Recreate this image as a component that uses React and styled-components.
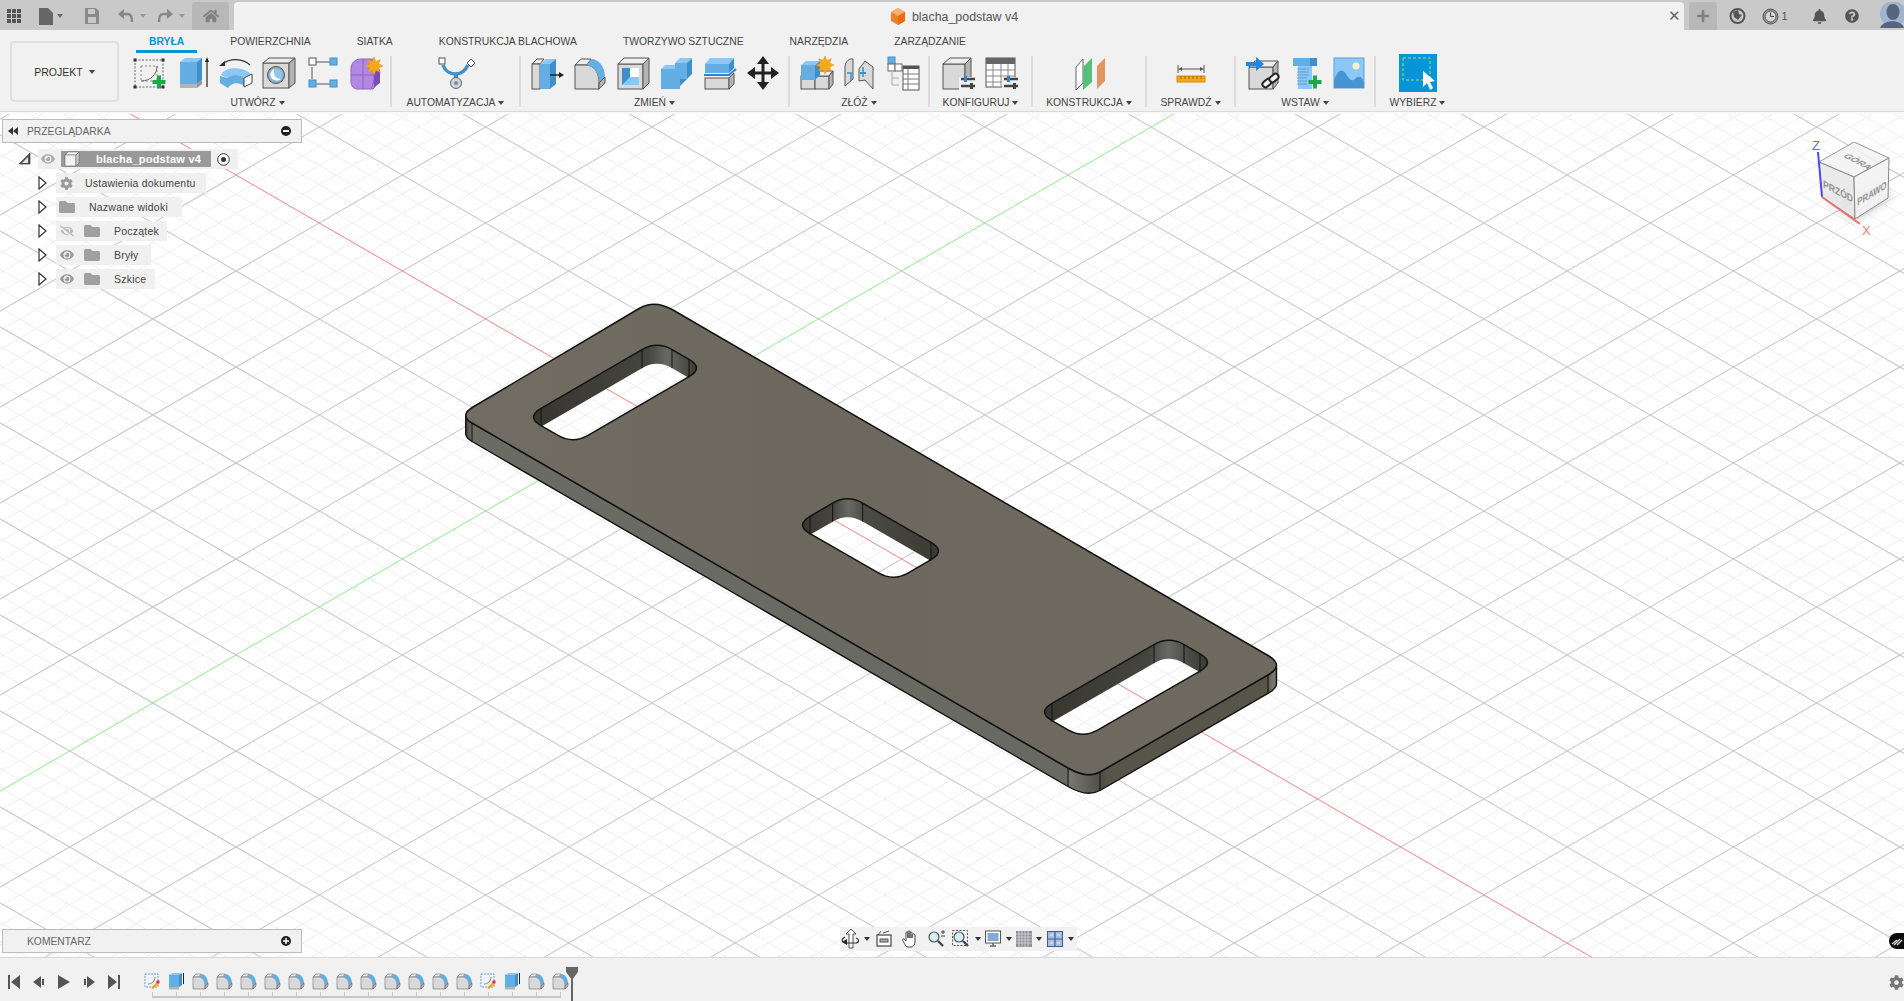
import React from "react";
import styled, { createGlobalStyle } from "styled-components";
import {
  FaBell,
  FaCog,
  FaEye,
  FaEyeSlash,
  FaFolder,
  FaHome,
  FaPlus,
  FaQuestionCircle,
} from "react-icons/fa";

const Global = createGlobalStyle`
  html, body { margin: 0; padding: 0; height: 100%; overflow: hidden; }
  body { font-family: "Liberation Sans", Arial, sans-serif; background: #fff; }
  #root { height: 100%; }
`;

const Page = styled.div`
  width: 1904px;
  height: 1001px;
  display: flex;
  flex-direction: column;
  overflow: hidden;
  background: #f9f9f9;
`;

/* ---------- top bar ---------- */
const TopBar = styled.div`
  height: 30px;
  flex: none;
  background: #c9c9c9;
  display: flex;
  align-items: flex-end;
  color: #666;
`;
const TopIcon = styled.div`
  width: ${(p) => p.$w || 30}px;
  height: 28px;
  display: flex;
  align-items: center;
  justify-content: center;
  flex: none;
  color: ${(p) => p.$color || "#666"};
`;
const Caret = styled.span`
  display: inline-block;
  width: 0;
  height: 0;
  flex: none;
  border-left: 3.5px solid transparent;
  border-right: 3.5px solid transparent;
  border-top: 4.5px solid ${(p) => p.$color || "#444"};
  margin-left: ${(p) => p.$ml ?? 3}px;
`;
const HomeTab = styled(TopIcon)`
  width: 37px;
  margin-left: 4px;
  background: #b8b8b8;
  border-radius: 3px 3px 0 0;
`;
const DocTab = styled.div`
  width: 1450px;
  margin-left: 5px;
  height: 28px;
  background: #f1f1f1;
  border-radius: 4px 4px 0 0;
  display: flex;
  align-items: center;
  position: relative;
`;
const DocTitle = styled.div`
  flex: 1;
  display: flex;
  align-items: center;
  justify-content: center;
  gap: 6px;
  font-size: 12.4px;
  color: #555;
  padding-left: 10px;
  padding-top: 1px;
  box-sizing: border-box;
  height: 28px;
`;
const CloseX = styled.div`
  width: 20px;
  margin-right: 0;
  font-size: 15px;
  color: #666;
  text-align: center;
`;
const PlusTab = styled(TopIcon)`
  width: 28px;
  margin-left: 5px;
  background: #b8b8b8;
  border-radius: 3px 3px 0 0;
`;
const ClockCount = styled.span`
  font-size: 11px;
  margin-left: 2px;
  color: #555;
`;
const AvatarSlot = styled.div`
  margin-left: auto;
  height: 26px;
  align-self: flex-start;
  margin-top: 2px;
`;

/* ---------- toolbar ---------- */
const Toolbar = styled.div`
  height: 81px;
  flex: none;
  background: #f1f1f1;
  display: flex;
  border-bottom: 1px solid #dadada;
  position: relative;
  z-index: 2;
`;
const ProjectButton = styled.div`
  width: 109px;
  height: 61px;
  margin: 11px 0 0 10px;
  box-sizing: border-box;
  border: 2px solid #e0e0e0;
  border-radius: 4px;
  display: flex;
  align-items: center;
  justify-content: center;
  font-size: 10.5px;
  color: #333;
  flex: none;
`;
const ToolColumn = styled.div`
  margin-left: 7px;
  display: flex;
  flex-direction: column;
`;
const Tabs = styled.div`
  display: flex;
  height: 23px;
`;
const Tab = styled.div`
  position: relative;
  padding: 0 23px;
  font-size: 10.35px;
  line-height: 23px;
  color: ${(p) => (p.$active ? "#0696d7" : "#444")};
  font-weight: ${(p) => (p.$active ? 700 : 400)};
  &::after {
    content: "";
    display: ${(p) => (p.$active ? "block" : "none")};
    position: absolute;
    left: 10px;
    right: 10px;
    bottom: 0;
    height: 3px;
    background: #0696d7;
  }
`;
const Groups = styled.div`
  display: flex;
  padding-left: 2px;
  margin-top: 3px;
`;
const Group = styled.div`
  width: ${(p) => p.$w}px;
  height: 51px;
  box-sizing: border-box;
  padding-right: ${(p) => p.$pr || 0}px;
  display: flex;
  flex-direction: column;
  align-items: center;
  border-right: ${(p) => (p.$last ? "none" : "2px solid #dcdcdc")};
`;
const IconRow = styled.div`
  display: flex;
  justify-content: center;
  height: 36px;
  margin-top: -1px;
`;
const ToolIcon = styled.div`
  width: ${(p) => p.$w || 43.5}px;
  height: 36px;
  display: flex;
  align-items: center;
  justify-content: center;
  flex: none;
`;
const GroupLabel = styled.div`
  margin-top: 6px;
  font-size: 10.3px;
  line-height: 12px;
  color: #444;
  display: flex;
  align-items: center;
  white-space: nowrap;
`;

/* ---------- viewport ---------- */
const Viewport = styled.div`
  flex: 1;
  margin-top: 2px;
  position: relative;
  background: #fff;
  overflow: hidden;
`;
const Canvas = styled.svg`
  position: absolute;
  inset: 0;
  width: 100%;
  height: 100%;
`;
const CubeSvg = styled.svg`
  position: absolute;
  right: 0;
  top: 6px;
  width: 144px;
  height: 130px;
`;
const BrowserPanel = styled.div`
  position: absolute;
  left: 2px;
  top: 5px;
  width: 300px;
`;
const PanelHead = styled.div`
  height: 24px;
  box-sizing: border-box;
  background: #f1f1f1;
  border: 1px solid #bbb;
  display: flex;
  align-items: center;
  font-size: 10.3px;
  color: #666;
  padding-left: ${(p) => p.$pl}px;
  position: relative;
`;
const Tree = styled.div`
  display: flex;
  flex-direction: column;
  gap: 4px;
  margin-top: 6px;
`;
const RootRow = styled.div`
  display: flex;
  align-items: center;
  height: 20px;
  padding-left: 17px;
`;
const RootBody = styled.div`
  height: 20px;
  width: 200px;
  margin-left: 7px;
  background: #f0f0f0;
  display: flex;
  align-items: center;
  padding-left: 3px;
  box-sizing: border-box;
  color: #aaa;
`;
const RootName = styled.div`
  width: 150px;
  height: 16px;
  margin-left: 6px;
  background: #999;
  display: flex;
  align-items: center;
  color: #fff;
  font-size: 11px;
  font-weight: 700;
  letter-spacing: 0.25px;
  box-sizing: border-box;
  padding-left: 3px;
  gap: 16px;
  white-space: nowrap;
`;
const TreeRow = styled.div`
  display: flex;
  align-items: center;
  height: 20px;
  padding-left: 36px;
`;
const RowBody = styled.div`
  height: 20px;
  margin-left: 9px;
  background: #f0f0f0;
  display: flex;
  align-items: center;
  width: ${(p) => p.$w}px;
  box-sizing: border-box;
  color: #999;
  font-size: 10.5px;
  letter-spacing: 0.22px;
  position: relative;
`;
const RowSlot = styled.span`
  width: ${(p) => p.$w}px;
  flex: none;
  display: flex;
  justify-content: center;
  align-items: center;
`;
const RowText = styled.span`
  color: #444;
  margin-left: ${(p) => p.$ml || 0}px;
  white-space: nowrap;
`;
const CommentPanel = styled.div`
  position: absolute;
  left: 2px;
  bottom: 4px;
  width: 300px;
`;
const NavBar = styled.div`
  position: absolute;
  left: 840px;
  top: 813px;
  width: 237px;
  height: 24px;
  background: #f1f1f1;
  display: flex;
  align-items: center;
  padding-left: 1px;
  box-sizing: border-box;
`;
const NavIcon = styled.div`
  width: ${(p) => p.$w}px;
  display: flex;
  align-items: center;
  justify-content: center;
  flex: none;
`;
const Badge = styled.div`
  position: absolute;
  right: -1px;
  bottom: 8px;
  width: 16px;
  height: 16px;
  border-radius: 50% 0 0 50%;
  background: #0c0c0c;
  display: flex;
  align-items: center;
  justify-content: center;
`;

/* ---------- timeline ---------- */
const Timeline = styled.div`
  height: 43px;
  flex: none;
  background: #f1f1f1;
  border-top: 1px solid #d8d8d8;
  display: flex;
  align-items: flex-start;
  position: relative;
`;
const Transport = styled.div`
  display: flex;
  width: 140px;
  padding: 17px 0 0 2px;
  box-sizing: border-box;
  flex: none;
`;
const TransportBtn = styled.div`
  width: 24.8px;
  display: flex;
  justify-content: center;
`;
const TimeItems = styled.div`
  position: relative;
  display: flex;
  padding-top: 14px;
  height: 41px;
  box-sizing: border-box;
  &::after {
    content: "";
    position: absolute;
    left: 12px;
    right: 12px;
    bottom: 1px;
    height: 2px;
    background: #c8c8c8;
  }
`;
const TimeItem = styled.div`
  width: 24px;
  height: 18px;
  display: flex;
  justify-content: center;
  position: relative;
  &::after {
    content: "";
    position: absolute;
    left: 12px;
    top: 20px;
    width: 1px;
    height: 6px;
    background: #c8c8c8;
  }
`;
const Marker = styled.svg`
  position: absolute;
  left: 565px;
  top: 9px;
  width: 14px;
  height: 34px;
`;
const GearCorner = styled.div`
  margin-left: auto;
  padding: 17px 0 0;
  margin-right: 0;
  color: #777;
  display: flex;
`;

/* ---------- small helpers ---------- */
const Ico = ({ w = 40, h = 36, children }) => (
  <svg width={w} height={h} viewBox={`0 0 ${w} ${h}`}>
    {children}
  </svg>
);

const BLUE = "#64aee4";
const DBLUE = "#3f8fcb";
const LBLUE = "#8cc7f5";
const GR = "#d9d9d9";
const GR2 = "#b4b4b4";
const OUT = "#555";

const Star = ({ x, y, r = 7 }) => {
  const pts = [];
  for (let i = 0; i < 16; i++) {
    const a = (i * Math.PI) / 8;
    const rr = i % 2 ? r * 0.55 : r;
    pts.push(`${x + rr * Math.cos(a)},${y + rr * Math.sin(a)}`);
  }
  return <polygon points={pts.join(" ")} fill="#f5a81c" stroke="#e08a10" strokeWidth=".5" />;
};

const GreenPlus = ({ x, y }) => (
  <g fill="#1fa84b">
    <rect x={x - 6.5} y={y - 2} width="13" height="4" />
    <rect x={x - 2} y={y - 6.5} width="4" height="13" />
  </g>
);

const SketchIcon = () => (
  <Ico>
    <rect x="6" y="5" width="28" height="27" fill="none" stroke="#666" strokeDasharray="2 1.5" />
    {[[6, 5], [34, 5], [6, 32], [34, 32]].map(([x, y]) => (
      <rect key={x + "" + y} x={x - 1.5} y={y - 1.5} width="3" height="3" fill="#333" />
    ))}
    <rect x="12" y="11" width="16" height="15" fill="none" stroke="#888" strokeDasharray="2 2" />
    <path d="M28 11C28 19 22 26 12 26" fill="none" stroke="#666" />
    <GreenPlus x="30" y="27" />
  </Ico>
);
const ExtrudeIcon = () => (
  <Ico>
    <rect x="8" y="7" width="17" height="22" fill={BLUE} />
    <polygon points="8,7 13,3 30,3 25,7" fill={LBLUE} />
    <polygon points="25,7 30,3 30,25 25,29" fill={DBLUE} />
    <rect x="8" y="29" width="17" height="4" fill={GR2} />
    <polygon points="25,29 30,25 30,29 25,33" fill="#999" />
    <path d="M35 32V6" stroke="#222" strokeWidth="1.2" />
    <polygon points="35,2 33,7 37,7" fill="#222" />
  </Ico>
);
const RevolveIcon = () => (
  <Ico>
    <path d="M5 20C8 11 30 11 35 20L28 23C24 19 15 19 11 23Z" fill={LBLUE} />
    <path d="M4 21L11 23C15 19 24 19 28 23L28 31C24 27 15 27 12 33L4 28Z" fill={BLUE} />
    <polygon points="28,23 36,19 36,28 28,32" fill="#fff" stroke="#444" />
    <path d="M6 9C14 3 27 3 34 10" fill="none" stroke="#333" strokeWidth="1.2" />
    <polygon points="3,11 9,6 9,11" fill="#333" />
  </Ico>
);
const HoleIcon = () => (
  <Ico>
    <rect x="4" y="8" width="26" height="25" fill={GR} stroke={OUT} />
    <polygon points="4,8 10,3 36,3 30,8" fill="#eee" stroke={OUT} />
    <polygon points="30,8 36,3 36,28 30,33" fill={GR2} stroke={OUT} />
    <circle cx="17" cy="20" r="8.5" fill="#9aa7b0" stroke="#555" />
    <circle cx="17" cy="20" r="6.5" fill={LBLUE} />
    <path d="M15 14C14 20 17 24 22 24C18 27 12 25 11.5 20C11.4 17 13 15 15 14Z" fill="#fff" />
  </Ico>
);
const ParamIcon = () => (
  <Ico>
    <path d="M13 7H28M9 12V24M13 29H28" stroke="#555" fill="none" />
    <rect x="6" y="3" width="7" height="7" fill="#fff" stroke="#555" />
    <rect x="27" y="3" width="7" height="7" fill={BLUE} stroke={DBLUE} />
    <rect x="6" y="25" width="7" height="7" fill={BLUE} stroke={DBLUE} />
    <rect x="27" y="25" width="7" height="7" fill={BLUE} stroke={DBLUE} />
  </Ico>
);
const FormIcon = () => (
  <Ico>
    <path d="M5 14C5 8 9 4 15 4H27L32 14V28L27 34H11C7 34 5 30 5 27Z" fill="#b188e2" stroke="#8e62c4" />
    <path d="M5 20H32M17 4V34M27 14C29 22 28 28 25 34" fill="none" stroke="#8e62c4" />
    <path d="M28 17L34 14V28L28 32Z" fill="#7a4cb4" />
    <Star x={28} y={11} r={9} />
  </Ico>
);
const AutomateIcon = () => (
  <Ico>
    <path d="M7 10C10 18 15 19 20 19C25 19 29 16 32 10" fill="none" stroke={DBLUE} strokeWidth="3.5" />
    <path d="M20 18V28" stroke={DBLUE} strokeWidth="4" />
    <circle cx="20" cy="28" r="5.5" fill="#c9d4dc" stroke="#667" />
    <circle cx="20" cy="28" r="2" fill="#889" />
    <rect x="3" y="3" width="6" height="6" fill="#fff" stroke="#555" />
    <polygon points="31,8 35,4 39,8 35,12" fill="#fff" stroke="#555" />
  </Ico>
);
const PressPullIcon = () => (
  <Ico>
    <polygon points="6,9 11,4 18,4 14,9" fill="#eee" stroke={OUT} />
    <rect x="6" y="9" width="8" height="25" fill={GR} stroke={OUT} />
    <rect x="14" y="9" width="10" height="25" fill={BLUE} />
    <polygon points="14,9 20,4 30,4 24,9" fill={LBLUE} />
    <polygon points="24,9 30,4 30,29 24,34" fill={DBLUE} />
    <path d="M24 20H34" stroke="#222" strokeWidth="1.5" />
    <polygon points="38,20 33,17 33,23" fill="#222" />
  </Ico>
);
const FilletIcon = ({ s = 1 }) => (
  <svg width={40 * s} height={36 * s} viewBox="0 0 40 36">
    <path d="M6 10L12 4H22L18 10Z" fill="#eee" stroke={OUT} />
    <path d="M6 10H16C26 10 30 18 30 28V34H6Z" fill={GR} stroke={OUT} />
    <path d="M22 4C30 4 36 12 36 22L30 28C30 18 26 12 18 10Z" fill={BLUE} />
    <polygon points="30,28 36,22 36,28 30,34" fill={GR2} stroke={OUT} />
  </svg>
);
const ShellIcon = () => (
  <Ico>
    <rect x="5" y="9" width="25" height="25" fill={GR} stroke={OUT} />
    <polygon points="5,9 11,3 36,3 30,9" fill="#eee" stroke={OUT} />
    <polygon points="30,9 36,3 36,28 30,34" fill={GR2} stroke={OUT} />
    <rect x="9" y="13" width="17" height="17" fill="#fff" />
    <rect x="9" y="13" width="8" height="17" fill={DBLUE} />
    <polygon points="9,30 17,22 26,22 26,30" fill={LBLUE} />
  </Ico>
);
const CombineIcon = () => (
  <Ico>
    <polygon points="19,8 24,3 36,3 31,8" fill={LBLUE} />
    <polygon points="5,14 9,10 19,10 19,14" fill={LBLUE} />
    <path d="M5 14H19V8H31V24H24V34H5Z" fill={BLUE} />
    <polygon points="31,8 36,3 36,19 31,24" fill={DBLUE} />
    <polygon points="24,24 31,24 24,31" fill={DBLUE} />
  </Ico>
);
const SplitIcon = () => (
  <Ico>
    <polygon points="5,9 10,3 34,3 29,9" fill={LBLUE} />
    <rect x="5" y="9" width="24" height="9" fill={BLUE} />
    <polygon points="29,9 34,3 34,13 29,18" fill={DBLUE} />
    <path d="M4 20H29L36 14" stroke="#2d82d2" strokeWidth="2" fill="none" />
    <rect x="5" y="23" width="24" height="11" fill={GR} stroke={OUT} />
    <polygon points="29,23 34,18 34,29 29,34" fill={GR2} stroke={OUT} />
  </Ico>
);
const MoveIcon = () => (
  <Ico>
    <path d="M20 6V30M6 18H34" stroke="#222" strokeWidth="3" />
    <polygon points="20,1 14,9 26,9" fill="#222" />
    <polygon points="20,35 14,27 26,27" fill="#222" />
    <polygon points="4,18 12,12 12,24" fill="#222" />
    <polygon points="36,18 28,12 28,24" fill="#222" />
  </Ico>
);
const NewComponentIcon = () => (
  <Ico>
    <rect x="5" y="21" width="14" height="13" fill={GR} stroke={OUT} />
    <rect x="19" y="21" width="14" height="13" fill={GR} stroke={OUT} />
    <polygon points="19,21 24,16 37,16 33,21" fill="#eee" stroke={OUT} />
    <polygon points="33,21 37,16 37,29 33,34" fill={GR2} stroke={OUT} />
    <rect x="5" y="10" width="14" height="15" fill={BLUE} />
    <polygon points="5,10 10,6 24,6 19,10" fill={LBLUE} />
    <polygon points="19,10 24,6 24,20 19,25" fill={DBLUE} />
    <Star x={29} y={10} r={9} />
  </Ico>
);
const JointIcon = () => (
  <Ico>
    <path d="M6 12C6 6 11 3 14 4V24L6 31Z" fill={GR} stroke={OUT} />
    <path d="M34 12L26 6L20 14V26L26 25L34 34Z" fill={GR} stroke={OUT} />
    <path d="M12 18V26M24 12V22M8 18H13" stroke={DBLUE} strokeWidth="1.5" fill="none" />
    <rect x="21" y="17" width="6" height="2" fill={DBLUE} />
  </Ico>
);
const BomIcon = () => (
  <Ico>
    <rect x="5" y="2" width="7" height="7" fill={BLUE} stroke={DBLUE} />
    <rect x="5" y="9" width="7" height="7" fill="#fff" stroke="#666" />
    <rect x="12" y="9" width="7" height="7" fill="#fff" stroke="#666" />
    <path d="M9 16V30H16M9 23H16" stroke="#aaa" fill="none" />
    <rect x="20" y="11" width="16" height="24" fill="#fff" stroke="#555" />
    <rect x="20" y="11" width="16" height="3" fill="#555" />
    <path d="M20 19H36M20 24H36M20 29H36M25 14V35" stroke="#777" />
  </Ico>
);
const Sliders = ({ x, y }) => (
  <g>
    <path d={`M${x} ${y}H${x + 14}M${x} ${y + 7}H${x + 14}`} stroke="#444" strokeWidth="2.5" />
    <rect x={x + 3} y={y - 3} width="3" height="6" fill="#2d82d2" />
    <rect x={x + 9} y={y + 4} width="3" height="6" fill="#444" />
  </g>
);
const ConfigBoxIcon = () => (
  <Ico>
    <rect x="4" y="9" width="22" height="25" fill={GR} stroke={OUT} />
    <polygon points="4,9 11,3 32,3 26,9" fill="#eee" stroke={OUT} />
    <polygon points="26,9 32,3 32,28 26,34" fill={GR2} stroke={OUT} />
    <rect x="20" y="22" width="18" height="14" fill="#f1f1f1" />
    <Sliders x={22} y={24} />
  </Ico>
);
const ConfigTableIcon = () => (
  <Ico>
    <rect x="4" y="3" width="29" height="29" fill="#fff" stroke="#555" />
    <rect x="4" y="3" width="29" height="6" fill="#666" />
    <path d="M4 15H33M4 21H33M4 27H33M11 9V32M19 9V32M26 9V32" stroke="#888" />
    <rect x="20" y="22" width="18" height="14" fill="#f1f1f1" />
    <Sliders x={22} y={24} />
  </Ico>
);
const PlaneIcon = () => (
  <Ico>
    <polygon points="7,12 14,4 14,28 7,35" fill="#fff" stroke="#666" />
    <polygon points="14,12 23,3 23,27 14,35" fill="#56c07a" />
    <polygon points="28,11 36,3 36,26 28,34" fill="#e09660" />
  </Ico>
);
const MeasureIcon = () => (
  <Ico>
    <path d="M7 10V18M33 10V18M9 14H31" stroke="#555" fill="none" />
    <polygon points="7,14 11,12 11,16" fill="#555" />
    <polygon points="33,14 29,12 29,16" fill="#555" />
    <rect x="6" y="21" width="28" height="6" fill="#f5a81c" stroke="#d08c10" />
    <path d="M10 21V24M14 21V24M18 21V24M22 21V24M26 21V24M30 21V24" stroke="#a06a00" />
  </Ico>
);
const DeriveIcon = () => (
  <Ico>
    <rect x="7" y="12" width="24" height="22" fill={GR} stroke={OUT} />
    <polygon points="7,12 13,6 36,6 31,12" fill="#eee" stroke={OUT} />
    <polygon points="31,12 36,6 36,28 31,34" fill={GR2} stroke={OUT} />
    <path d="M4 9H16" stroke="#1e88e5" strokeWidth="4" />
    <polygon points="22,9 14,2 14,16" fill="#1e88e5" />
    <g fill="#f1f1f1" stroke="#222" strokeWidth="2">
      <rect x="20" y="25" width="10" height="6" rx="3" transform="rotate(-40 25 28)" />
      <rect x="27" y="20" width="10" height="6" rx="3" transform="rotate(-40 32 23)" />
    </g>
  </Ico>
);
const BoltIcon = () => (
  <Ico>
    <rect x="8" y="3" width="24" height="8" rx="1" fill={BLUE} />
    <rect x="25" y="3" width="7" height="8" fill={DBLUE} />
    <rect x="13" y="11" width="14" height="23" fill={LBLUE} />
    <path d="M12 14H24M12 17H24M12 20H24M12 23H22M12 26H22M12 29H22" stroke="#5aa0d6" />
    <GreenPlus x="30" y="27" />
  </Ico>
);
const ImageIcon = () => (
  <Ico>
    <rect x="5" y="3" width="30" height="30" fill={LBLUE} stroke="#5aa0d6" />
    <circle cx="27" cy="11" r="3.5" fill="#fdf3c8" />
    <path d="M5 33V25C10 13 14 13 19 22C22 26 24 26 26 24C30 20 33 22 35 27V33Z" fill="#4695d2" />
  </Ico>
);
const SelectIcon = () => (
  <svg width="38" height="38" viewBox="0 0 38 38">
    <rect width="38" height="38" fill="#0696d7" />
    <rect x="4" y="4" width="27" height="22" fill="none" stroke="#9be36a" strokeDasharray="3 2" />
    <polygon points="24,17 24,33 28,29 31,36 34,34 31,28 36,27" fill="#fff" />
  </svg>
);

const TinySketch = () => (
  <svg width="18" height="18" viewBox="0 0 18 18">
    <rect x="2" y="2" width="13" height="13" fill="#eef4fa" stroke="#6aa7d8" strokeDasharray="2 1" />
    <path d="M12 5C12 9 9 12 5 12" stroke="#888" fill="none" />
    <path d="M8 16L14 10L16 12L10 17Z" fill="#f5a81c" />
    <circle cx="15" cy="10" r="1.8" fill="#e33" />
  </svg>
);
const TinyExtrude = () => (
  <svg width="18" height="18" viewBox="0 0 18 18">
    <rect x="2" y="3" width="10" height="12" fill={BLUE} />
    <polygon points="2,3 5,1 15,1 12,3" fill={LBLUE} />
    <polygon points="12,3 15,1 15,13 12,15" fill={DBLUE} />
    <rect x="2" y="15" width="10" height="2.5" fill={GR2} />
    <path d="M16.5 12V1" stroke="#222" />
  </svg>
);
const TinyFillet = () => <FilletIcon s={0.5} />;

const timelineOps = [
  TinySketch, TinyExtrude,
  TinyFillet, TinyFillet, TinyFillet, TinyFillet, TinyFillet, TinyFillet,
  TinyFillet, TinyFillet, TinyFillet, TinyFillet, TinyFillet, TinyFillet,
  TinySketch, TinyExtrude, TinyFillet, TinyFillet,
];

/* ---------- canvas geometry ---------- */
const ISO = 0.577;
const OX = 652;
const OY = 415;
const STEP = 19.2;

function GridLines() {
  const lines = [];
  for (let k = -90; k <= 90; k++) {
    if (k === 0) continue;
    const major = k % 5 === 0;
    const stroke = major ? "#cbcbcb" : "#ededed";
    const dy = k * STEP;
    [1, -1].forEach((s) => {
      lines.push(
        <line
          key={`${k}${s}`}
          x1={0}
          x2={1904}
          y1={OY + s * ISO * (0 - OX) + dy}
          y2={OY + s * ISO * (1904 - OX) + dy}
          stroke={stroke}
          strokeWidth={major ? 1.1 : 1}
        />
      );
    });
  }
  // minor lines go underneath the major ones
  lines.sort((a, b) => (a.props.strokeWidth > b.props.strokeWidth ? 1 : -1));
  return <g>{lines}</g>;
}

const lerp = (a, b, f) => [a[0] + (b[0] - a[0]) * f, a[1] + (b[1] - a[1]) * f];

// rounded parallelogram through sharp corners L, T, R, B
function quadPath(c, t) {
  let d = "";
  c.forEach((p, i) => {
    const prev = c[(i + 3) % 4];
    const next = c[(i + 1) % 4];
    const a = lerp(p, prev, t / Math.abs(p[0] - prev[0]));
    const b = lerp(p, next, t / Math.abs(p[0] - next[0]));
    d += `${i === 0 ? "M" : "L"}${a[0]} ${a[1]}Q${p[0]} ${p[1]} ${b[0]} ${b[1]}`;
  });
  return d + "Z";
}

const THICK = 18.5;
const holeCorners = (L, T, R) => [L, T, R, [L[0] + R[0] - T[0], L[1] + R[1] - T[1]]];
const HOLES = [
  { c: holeCorners([526, 417], [657, 341], [704, 368]), g: 0.82 },
  { c: holeCorners([795, 525], [847.6, 494.5], [946, 551]), g: 0.34 },
  { c: holeCorners([1037, 712], [1169, 636], [1215, 662.5]), g: 0.76 },
];
const HOLE_T = 15;

const PLATE_TOP =
  "M473 407L640 308Q654.6 299.4 673 310L1268 655.5Q1285 665.5 1268 674.8L1100 772Q1087 779 1068 768L472 423Q459 415.4 473 407Z";
const PLATE_SIDE =
  "M465.75 415Q465.5 419 472 423L1068 768Q1087 779 1100 772L1268 674.8Q1276.5 670 1276.5 665.4V684Q1276.5 688.6 1268 693.3L1100 790.5Q1087 797.5 1068 786.5L472 441.5Q465.5 437.5 465.75 433.5Z";

function Hole({ h, i }) {
  const d = quadPath(h.c, HOLE_T);
  const [L, T, R] = h.c;
  const ticks = [
    lerp(L, T, HOLE_T / Math.abs(L[0] - T[0])),
    lerp(T, L, HOLE_T / Math.abs(L[0] - T[0])),
    lerp(T, R, HOLE_T / Math.abs(T[0] - R[0])),
    lerp(R, T, HOLE_T / Math.abs(T[0] - R[0])),
  ];
  return (
    <g>
      <defs>
        <linearGradient id={`wall${i}`} x1="0" x2="1" y1="0" y2="0">
          <stop offset="0" stopColor="#37362f" />
          <stop offset={h.g - 0.12} stopColor="#454540" />
          <stop offset={h.g} stopColor="#686864" />
          <stop offset={h.g + 0.12} stopColor="#4c4c46" />
          <stop offset="1" stopColor="#3a3a33" />
        </linearGradient>
        <mask id={`wallMask${i}`} maskUnits="userSpaceOnUse" x="0" y="114" width="1904" height="843">
          <path d={d} fill="#fff" />
          <path d={d} fill="#000" transform={`translate(0 ${THICK})`} />
        </mask>
      </defs>
      <path d={d} fill={`url(#wall${i})`} mask={`url(#wallMask${i})`} />
      {ticks.map((p, j) => (
        <line key={j} x1={p[0]} x2={p[0]} y1={p[1]} y2={p[1] + THICK} stroke="#111" strokeWidth="1" />
      ))}
      <path d={d} fill="none" stroke="#111" strokeWidth="1.5" />
    </g>
  );
}

function Plate() {
  return (
    <g>
      <defs>
        <linearGradient id="side" gradientUnits="userSpaceOnUse" x1="465" x2="1277" y1="0" y2="0">
          <stop offset="0" stopColor="#3f3f3a" />
          <stop offset="0.008" stopColor="#6a6c64" />
          <stop offset="0.74" stopColor="#686a62" />
          <stop offset="0.745" stopColor="#76786f" />
          <stop offset="0.785" stopColor="#4f4d44" />
          <stop offset="0.79" stopColor="#57544a" />
          <stop offset="0.988" stopColor="#57544a" />
          <stop offset="0.995" stopColor="#77786e" />
          <stop offset="1" stopColor="#6e6e64" />
        </linearGradient>
        <linearGradient id="top" x1="0" x2="1" y1="0" y2="0">
          <stop offset="0" stopColor="#716d62" />
          <stop offset="0.4" stopColor="#6c685e" />
          <stop offset="1" stopColor="#6e6a60" />
        </linearGradient>
      </defs>
      <path d={PLATE_SIDE} fill="url(#side)" stroke="#111" strokeWidth="1.4" />
      {[[472, 423], [1068, 768], [1100, 772], [1268, 675]].map(([x, y]) => (
        <line key={x} x1={x} x2={x} y1={y} y2={y + THICK} stroke="#111" strokeWidth="1" />
      ))}
      <path
        d={PLATE_TOP + HOLES.map((h) => quadPath(h.c, HOLE_T)).join("")}
        fill="url(#top)"
        fillRule="evenodd"
      />
      {HOLES.map((h, i) => (
        <Hole key={i} h={h} i={i} />
      ))}
      <path d={PLATE_TOP} fill="none" stroke="#111" strokeWidth="1.5" />
    </g>
  );
}

function ViewCube() {
  return (
    <CubeSvg viewBox="1760 120 144 130">
      <defs>
        <filter id="cubeShadow" x="-30%" y="-30%" width="160%" height="160%">
          <feGaussianBlur stdDeviation="5" />
        </filter>
      </defs>
      <polygon points="1824,199 1856,222 1892,198 1880,180" fill="#000" opacity=".16" filter="url(#cubeShadow)" />
      <polygon points="1819,162 1854,142 1889,158 1854,177" fill="#f2f2f2" fillOpacity=".85" stroke="#999" />
      <polygon points="1819,162 1854,177 1855,219 1822,197" fill="#e8e8e8" fillOpacity=".9" stroke="#888" />
      <polygon points="1854,177 1889,158 1888,198 1855,219" fill="#f3f3f3" fillOpacity=".92" stroke="#888" />
      <g fontFamily="Liberation Sans, Arial, sans-serif" fontWeight="700" fontSize="10.5" fill="#949494" textAnchor="middle">
        <text transform="matrix(.8 .42 -.8 .42 1855 163)">GÓRA</text>
        <text transform="matrix(.82 .42 0 1 1838 195)">PRZÓD</text>
        <text transform="matrix(.74 -.46 0 1 1872 197)">PRAWO</text>
      </g>
      <line x1="1818" y1="152" x2="1822" y2="197" stroke="#4a4af0" strokeWidth="2" />
      <line x1="1822" y1="197" x2="1860" y2="224" stroke="#f07070" strokeWidth="2" />
      <g fontFamily="Liberation Sans, Arial, sans-serif" fontSize="13">
        <text x="1812" y="150" fill="#6a6af2">Z</text>
        <text x="1862" y="235" fill="#f08080">X</text>
      </g>
    </CubeSvg>
  );
}

/* ---------- nav bar icons ---------- */
const OrbitNav = () => (
  <svg width="20" height="20" viewBox="0 0 20 20">
    <path d="M8 19V5H5L10 0L15 5H12V19Z" fill="#fff" stroke="#555" />
    <path d="M4 8C0 10 0 14 6 14H15C19 13 18 10 15 9" fill="none" stroke="#333" strokeWidth="1.2" />
    <polygon points="1,13 6,10 6,16" fill="#222" />
  </svg>
);
const LookNav = () => (
  <svg width="18" height="18" viewBox="0 0 18 18">
    <rect x="2" y="5" width="14" height="11" fill="#fff" stroke="#444" strokeWidth="1.2" />
    <rect x="5" y="9" width="8" height="3" fill="#aaa" stroke="#555" />
    <path d="M3 5L6 1M8 3L14 1" stroke="#555" />
  </svg>
);
const HandNav = () => (
  <svg width="18" height="18" viewBox="0 0 18 18">
    <path d="M5 16C3 13 1 10 2 9C3 8 4 10 5 11V3C5 1.5 7 1.5 7 3V8V2C7 .5 9 .5 9 2V8V3C9 1.5 11 1.5 11 3V8V5C11 3.5 14 3.5 14 5V12C14 15 12 17 10 17H7C6 17 5.500 16.500 5 16Z" fill="#fff" stroke="#444" />
  </svg>
);
const ZoomNav = ({ w = 18, dashed }) => (
  <svg width={w} height="18" viewBox={`0 0 ${w} 18`}>
    {dashed && <rect x=".5" y=".5" width="15" height="15" fill="none" stroke="#555" strokeDasharray="2 1.5" />}
    <circle cx="7" cy="7" r="5" fill="#d9edf5" stroke="#555" strokeWidth="1.2" />
    <path d="M11 11L16 16" stroke="#445" strokeWidth="2.4" />
    {!dashed && <path d="M14 2H18M16 0V4M14 6H18" stroke="#444" />}
  </svg>
);
const DisplayNav = () => (
  <svg width="17" height="18" viewBox="0 0 17 18">
    <rect x=".5" y="1" width="15" height="12" fill="#fff" stroke="#555" />
    <rect x="2.5" y="3" width="11" height="8" fill="#86a9d8" />
    <path d="M5 16H11M8 13V16" stroke="#666" strokeWidth="1.5" />
  </svg>
);
const GridNav = () => (
  <svg width="17" height="17" viewBox="0 0 17 17">
    <rect width="16" height="16" fill="#8f8f96" />
    <path d="M3 0V16M6 0V16M9 0V16M12 0V16M0 3H16M0 6H16M0 9H16M0 12H16" stroke="#eee" strokeWidth=".6" />
  </svg>
);
const ViewsNav = () => (
  <svg width="17" height="17" viewBox="0 0 17 17">
    <rect x=".5" y=".5" width="15" height="15" fill="#a9bfe0" stroke="#3f5f92" />
    <path d="M8 0V16M0 8H16" stroke="#3f5f92" strokeWidth="1.2" />
    <path d="M3 4H6M10 4H13M3 12H6M10 12H13" stroke="#e8eff8" strokeWidth="1.2" />
  </svg>
);

const Expander = () => (
  <svg width="9" height="14" viewBox="0 0 9 14">
    <polygon points="1,1 8,7 1,13" fill="#fff" stroke="#333" strokeWidth="1.2" />
  </svg>
);
const SmallFolder = () => <FaFolder size={16} color="#a0a0a0" />;

const TransportIcon = ({ d }) => (
  <svg width="14" height="14" viewBox="0 0 14 14">
    <path d={d} fill="#555" />
  </svg>
);

const tabs = ["BRYŁA", "POWIERZCHNIA", "SIATKA", "KONSTRUKCJA BLACHOWA", "TWORZYWO SZTUCZNE", "NARZĘDZIA", "ZARZĄDZANIE"];

const groups = [
  { label: "UTWÓRZ", w: 264, pr: 3, icons: [SketchIcon, ExtrudeIcon, RevolveIcon, HoleIcon, ParamIcon, FormIcon] },
  { label: "AUTOMATYZACJA", w: 129, icons: [AutomateIcon] },
  { label: "ZMIEŃ", w: 269, icons: [PressPullIcon, FilletIcon, ShellIcon, CombineIcon, SplitIcon, MoveIcon] },
  { label: "ZŁÓŻ", w: 140, icons: [NewComponentIcon, JointIcon, BomIcon] },
  { label: "KONFIGURUJ", w: 103, icons: [ConfigBoxIcon, ConfigTableIcon] },
  { label: "KONSTRUKCJA", w: 114, icons: [PlaneIcon] },
  { label: "SPRAWDŹ", w: 89, icons: [MeasureIcon] },
  { label: "WSTAW", w: 140, icons: [DeriveIcon, BoltIcon, ImageIcon] },
  { label: "WYBIERZ", w: 83, last: true, icons: [SelectIcon] },
];

const rows = [
  { w: 150, icon: [<FaCog key="g" size={13} />], slots: [20], text: "Ustawienia dokumentu", ml: 9 },
  { w: 126, icon: [<SmallFolder key="f" />], slots: [22], text: "Nazwane widoki", ml: 11 },
  { w: 111, icon: [<FaEyeSlash key="e" size={14} color="#bbb" />, <SmallFolder key="f" />], slots: [22, 28], text: "Początek", ml: 8 },
  { w: 95, icon: [<FaEye key="e" size={14} />, <SmallFolder key="f" />], slots: [22, 28], text: "Bryły", ml: 8 },
  { w: 99, icon: [<FaEye key="e" size={14} />, <SmallFolder key="f" />], slots: [22, 28], text: "Szkice", ml: 8 },
];

const NavCaret = ({ w }) => (
  <NavIcon $w={w}>
    <Caret $ml={0} $color="#333" />
  </NavIcon>
);

export default function App() {
  return (
    <Page>
      <Global />
      <TopBar>
        <TopIcon $w={28}>
          <svg width="14" height="14" viewBox="0 0 14 14" fill="#555">
            {[0, 5, 10].map((x) =>
              [0, 5, 10].map((y) => <rect key={`${x}${y}`} x={x} y={y} width="4" height="4" />)
            )}
          </svg>
        </TopIcon>
        <TopIcon $w={46}>
          <svg width="14" height="17" viewBox="0 0 14 17" fill="#666">
            <path d="M0 0H9L14 5V17H0Z" />
          </svg>
          <Caret $color="#666" $ml={4} />
        </TopIcon>
        <TopIcon $w={36} $color="#888">
          <svg width="14" height="16" viewBox="0 0 14 16" fill="#8a8a8a">
            <path d="M0 0H11L14 3V16H0ZM3 1V6H10V1ZM3 9V15H11V9Z" fillRule="evenodd" />
          </svg>
        </TopIcon>
        <TopIcon $w={44}>
          <svg width="16" height="14" viewBox="0 0 16 14">
            <path d="M2 5H10C13 5 14 8 14 13" fill="none" stroke="#888" strokeWidth="2.4" />
            <polygon points="0,5 6,0 6,10" fill="#888" />
          </svg>
          <Caret $color="#999" $ml={6} />
        </TopIcon>
        <TopIcon $w={34}>
          <svg width="16" height="14" viewBox="0 0 16 14">
            <path d="M14 5H6C3 5 2 8 2 13" fill="none" stroke="#888" strokeWidth="2.4" />
            <polygon points="16,5 10,0 10,10" fill="#888" />
          </svg>
          <Caret $color="#999" $ml={6} />
        </TopIcon>
        <HomeTab $color="#808080">
          <FaHome size={16} />
        </HomeTab>
        <DocTab>
          <DocTitle>
            <svg width="16" height="17" viewBox="0 0 16 17">
              <polygon points="8,0 15,4 15,13 8,17 1,13 1,4" fill="#f07f27" />
              <polygon points="8,0 15,4 8,8 1,4" fill="#f9ae73" />
              <polygon points="8,8 15,4 15,13 8,17" fill="#e96b14" />
            </svg>
            blacha_podstaw v4
          </DocTitle>
          <CloseX>✕</CloseX>
        </DocTab>
        <PlusTab $color="#808080">
          <FaPlus size={14} />
        </PlusTab>
        <TopIcon $w={40}>
          <svg width="17" height="18" viewBox="0 0 17 18">
            <circle cx="8.500" cy="9" r="7" fill="none" stroke="#555" strokeWidth="2" />
            <path d="M4 5L9 3L10 7L13 8L9 13L5 10Z" fill="#555" />
          </svg>
        </TopIcon>
        <TopIcon $w={36}>
          <svg width="17" height="17" viewBox="0 0 17 17">
            <circle cx="8.500" cy="8.500" r="7.500" fill="#999" stroke="#555" />
            <circle cx="8.500" cy="8.500" r="5.500" fill="#d4d4d4" stroke="#555" />
            <path d="M8.500 4.500V8.500H12" fill="none" stroke="#444" />
          </svg>
          <ClockCount>1</ClockCount>
        </TopIcon>
        <TopIcon $w={52}>
          <FaBell size={15} color="#555" />
        </TopIcon>
        <TopIcon $w={14}>
          <FaQuestionCircle size={16} color="#555" />
        </TopIcon>
        <AvatarSlot>
          <svg width="24" height="26" viewBox="0 0 24 26">
            <circle cx="13" cy="12" r="13" fill="#a3b3cd" />
            <ellipse cx="13" cy="10" rx="6.500" ry="8" fill="#55657f" />
            <path d="M0 26C3 17 22 17 24 26Z" fill="#55657f" />
          </svg>
        </AvatarSlot>
      </TopBar>

      <Toolbar>
        <ProjectButton>
          PROJEKT
          <Caret $ml={6} />
        </ProjectButton>
        <ToolColumn>
          <Tabs>
            {tabs.map((t, i) => (
              <Tab key={t} $active={i === 0}>
                {t}
              </Tab>
            ))}
          </Tabs>
          <Groups>
            {groups.map((g) => (
              <Group key={g.label} $w={g.w} $pr={g.pr} $last={g.last}>
                <IconRow>
                  {g.icons.map((Icon, i) => (
                    <ToolIcon key={i}>
                      <Icon />
                    </ToolIcon>
                  ))}
                </IconRow>
                <GroupLabel>
                  {g.label}
                  <Caret $ml={3} />
                </GroupLabel>
              </Group>
            ))}
          </Groups>
        </ToolColumn>
      </Toolbar>

      <Viewport>
        <Canvas viewBox="0 114 1904 843" preserveAspectRatio="none">
          <GridLines />
          <line x1={OX - 800} x2={OX + 1400} y1={OY - 800 * ISO} y2={OY + 1400 * ISO} stroke="#f58282" />
          <line x1={0} x2={1300} y1={OY + OX * ISO} y2={OY - (1300 - OX) * ISO} stroke="#8fec8c" />
          <Plate />
        </Canvas>
        <ViewCube />

        <BrowserPanel>
          <PanelHead $pl={24}>
            <svg width="10" height="8" viewBox="0 0 10 8" style={{ position: "absolute", left: 5, top: 7 }}>
              <path d="M5 0V8L0 4ZM10 0V8L5 4Z" fill="#333" />
            </svg>
            PRZEGLĄDARKA
            <svg width="10" height="10" viewBox="0 0 10 10" style={{ position: "absolute", left: 278, top: 6 }}>
              <circle cx="5" cy="5" r="5" fill="#222" />
              <rect x="2" y="4" width="6" height="2" fill="#fff" />
            </svg>
          </PanelHead>
          <Tree>
            <RootRow>
              <svg width="12" height="12" viewBox="0 0 12 12">
                <polygon points="11,0 11,11 0,11" fill="#555" stroke="#222" strokeWidth=".6" />
                <polygon points="9,4 9,10 3,10" fill="#e8e8e8" />
              </svg>
              <RootBody>
                <FaEye size={14} />
                <RootName>
                  <svg width="16" height="16" viewBox="0 0 16 16">
                    <polygon points="1,4 4,1 15,1 12,4" fill="#fff" stroke="#666" strokeWidth=".6" />
                    <rect x="1" y="4" width="11" height="11" fill="#f2f2f2" stroke="#666" strokeWidth=".6" />
                    <polygon points="12,4 15,1 15,12 12,15" fill="#ccc" stroke="#666" strokeWidth=".6" />
                  </svg>
                  blacha_podstaw v4
                </RootName>
                <RowSlot $w={25}>
                  <svg width="13" height="13" viewBox="0 0 13 13">
                    <circle cx="6.500" cy="6.500" r="5.800" fill="#fff" stroke="#333" />
                    <circle cx="6.500" cy="6.500" r="2.500" fill="#333" />
                  </svg>
                </RowSlot>
              </RootBody>
            </RootRow>
            {rows.map((r) => (
              <TreeRow key={r.text}>
                <Expander />
                <RowBody $w={r.w}>
                  {r.icon.map((ic, i) => (
                    <RowSlot key={i} $w={r.slots[i]}>
                      {ic}
                    </RowSlot>
                  ))}
                  <RowText $ml={r.ml}>{r.text}</RowText>
                </RowBody>
              </TreeRow>
            ))}
          </Tree>
        </BrowserPanel>

        <CommentPanel>
          <PanelHead $pl={24}>
            KOMENTARZ
            <svg width="10" height="10" viewBox="0 0 10 10" style={{ position: "absolute", left: 278, top: 6 }}>
              <circle cx="5" cy="5" r="5" fill="#222" />
              <path d="M2 5H8M5 2V8" stroke="#fff" strokeWidth="1.5" />
            </svg>
          </PanelHead>
        </CommentPanel>

        <NavBar>
          <NavIcon $w={20}>
            <OrbitNav />
          </NavIcon>
          <NavCaret w={12} />
          <NavIcon $w={22}>
            <LookNav />
          </NavIcon>
          <NavIcon $w={29}>
            <HandNav />
          </NavIcon>
          <NavIcon $w={24}>
            <ZoomNav />
          </NavIcon>
          <NavIcon $w={26}>
            <ZoomNav dashed />
          </NavIcon>
          <NavCaret w={8} />
          <NavIcon $w={23}>
            <DisplayNav />
          </NavIcon>
          <NavCaret w={8} />
          <NavIcon $w={22}>
            <GridNav />
          </NavIcon>
          <NavCaret w={8} />
          <NavIcon $w={24}>
            <ViewsNav />
          </NavIcon>
          <NavCaret w={8} />
        </NavBar>

        <Badge>
          <svg width="12" height="10" viewBox="0 0 12 10">
            <path d="M1 8L6 4M3 9L9 3M6 9L11 4" stroke="#ddd" strokeWidth="1.300" />
          </svg>
        </Badge>
      </Viewport>

      <Timeline>
        <Transport>
          <TransportBtn>
            <TransportIcon d="M1 0H3V14H1ZM13 0V14L4 7Z" />
          </TransportBtn>
          <TransportBtn>
            <TransportIcon d="M9 1V13L1 7ZM10 4H12V10H10Z" />
          </TransportBtn>
          <TransportBtn>
            <TransportIcon d="M1 0L13 7L1 14Z" />
          </TransportBtn>
          <TransportBtn>
            <TransportIcon d="M5 1V13L13 7ZM2 4H4V10H2Z" />
          </TransportBtn>
          <TransportBtn>
            <TransportIcon d="M11 0H13V14H11ZM1 0V14L10 7Z" />
          </TransportBtn>
        </Transport>
        <TimeItems>
          {timelineOps.map((Op, i) => (
            <TimeItem key={i}>
              <Op />
            </TimeItem>
          ))}
        </TimeItems>
        <Marker viewBox="0 0 14 34">
          <polygon points="1,0 13,0 13,5 7,13 1,5" fill="#666" />
          <rect x="6" y="10" width="2" height="24" fill="#666" />
        </Marker>
        <GearCorner>
          <FaCog size={15} />
        </GearCorner>
      </Timeline>
    </Page>
  );
}
